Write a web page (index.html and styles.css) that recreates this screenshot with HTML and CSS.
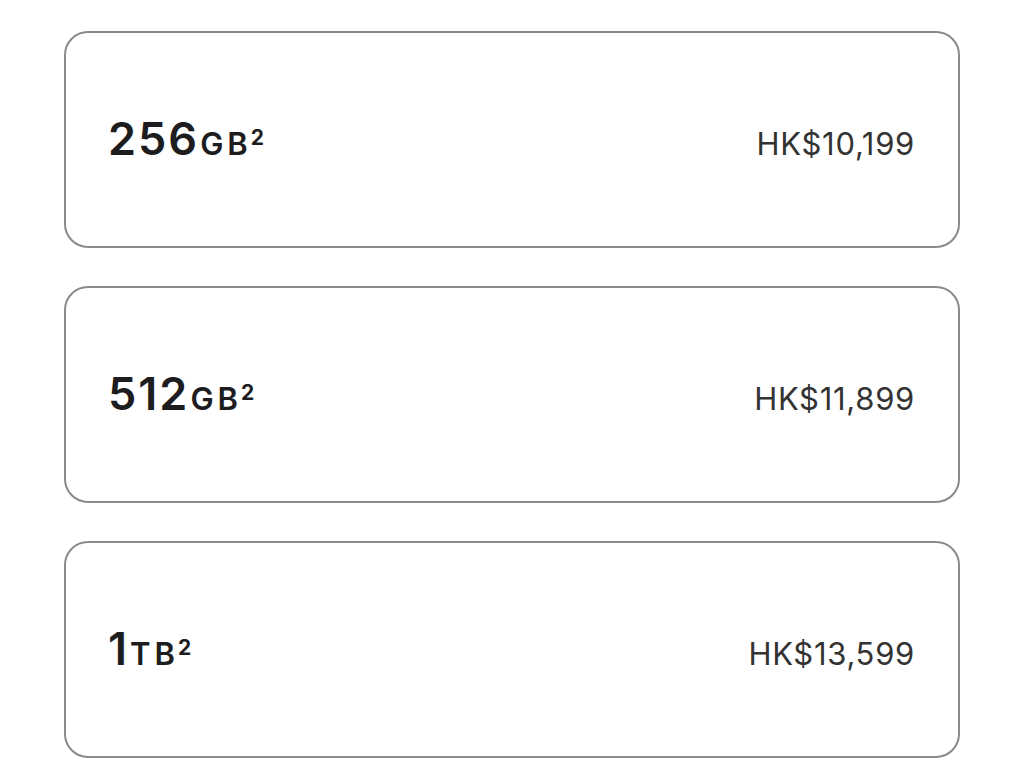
FILE: index.html
```html
<!DOCTYPE html>
<html>
<head>
<meta charset="utf-8">
<link rel="stylesheet" href="styles.css">
</head>
<body>
<div class="list">
  <div class="card">
    <div class="cap"><span class="num">256</span><span class="unit">GB</span><sup class="note">2</sup></div>
    <div class="price">HK$10,199</div>
  </div>
  <div class="card">
    <div class="cap"><span class="num">512</span><span class="unit">GB</span><sup class="note">2</sup></div>
    <div class="price">HK$11,899</div>
  </div>
  <div class="card">
    <div class="cap"><span class="num">1</span><span class="unit">TB</span><sup class="note">2</sup></div>
    <div class="price">HK$13,599</div>
  </div>
</div>
</body>
</html>
```
FILE: styles.css
```css
html, body {
  margin: 0;
  padding: 0;
  background: #fff;
}
body {
  font-family: Inter, "Liberation Sans", sans-serif;
  color: #1d1d1f;
}
.list {
  display: flex;
  flex-direction: column;
  gap: 38px;
  padding: 31px 64px 0 64px;
}
.card {
  box-sizing: border-box;
  height: 217px;
  border: 2px solid #8a8a8a;
  border-radius: 24px;
  display: flex;
  align-items: baseline;
  justify-content: space-between;
  padding: 78px 43px 0 42px;
}
.cap {
  display: flex;
  align-items: baseline;
  font-weight: 600;
}
.num {
  font-size: 45px;
  letter-spacing: 2px;
}
.unit {
  font-size: 31px;
  letter-spacing: 4px;
  margin-left: 1px;
}
.note {
  font-size: 21px;
  font-weight: 700;
  position: relative;
  top: -10px;
  vertical-align: baseline;
  margin-left: -1px;
}
.price {
  font-size: 31px;
  font-weight: 400;
  letter-spacing: 0.7px;
  color: #333;
}
```
